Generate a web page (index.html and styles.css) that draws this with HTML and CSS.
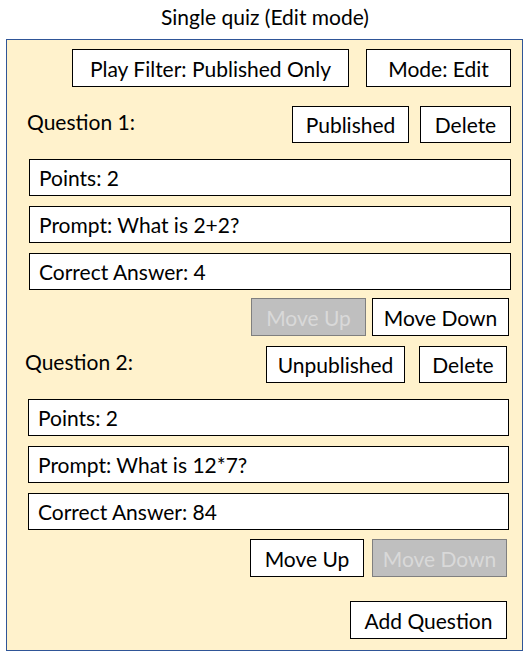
FILE: index.html
```html
<!DOCTYPE html>
<html>
<head>
<meta charset="utf-8">
<link rel="stylesheet" href="styles.css">
</head>
<body>
<h1 class="title">Single quiz (Edit mode)</h1>
<div class="panel">
  <div class="row top-row">
    <button class="btn btn-filter">Play Filter: Published Only</button>
    <button class="btn btn-mode">Mode: Edit</button>
  </div>

  <div class="question q1">
    <div class="q-head">
      <span class="q-label">Question 1:</span>
      <div class="q-actions">
        <button class="btn btn-pub">Published</button>
        <button class="btn btn-del">Delete</button>
      </div>
    </div>
    <div class="fields">
      <div class="field">Points: 2</div>
      <div class="field">Prompt: What is 2+2?</div>
      <div class="field">Correct Answer: 4</div>
    </div>
    <div class="move-row">
      <button class="btn btn-up disabled">Move Up</button>
      <button class="btn btn-down">Move Down</button>
    </div>
  </div>

  <div class="question q2">
    <div class="q-head">
      <span class="q-label">Question 2:</span>
      <div class="q-actions">
        <button class="btn btn-unpub">Unpublished</button>
        <button class="btn btn-del">Delete</button>
      </div>
    </div>
    <div class="fields">
      <div class="field">Points: 2</div>
      <div class="field">Prompt: What is 12*7?</div>
      <div class="field">Correct Answer: 84</div>
    </div>
    <div class="move-row">
      <button class="btn btn-up">Move Up</button>
      <button class="btn btn-down disabled">Move Down</button>
    </div>
  </div>

  <div class="row add-row">
    <button class="btn btn-add">Add Question</button>
  </div>
</div>
</body>
</html>
```

FILE: styles.css
```css
* { box-sizing: border-box; }

html, body {
  margin: 0;
  padding: 0;
  background: #ffffff;
}

body {
  font-family: "Lato", "Open Sans", sans-serif;
  font-size: 21px;
  color: #000;
  width: 530px;
  height: 659px;
}

.title {
  margin: 0;
  height: 39px;
  font-size: 21px;
  font-weight: normal;
  text-align: center;
  line-height: 33px;
}

.panel {
  margin-left: 6px;
  width: 517px;
  height: 612px;
  border: 1px solid #2f5597;
  background: #fff2cc;
  display: flex;
  flex-direction: column;
}

.btn {
  font: inherit;
  color: #000;
  background: #fff;
  border: 1px solid #000;
  height: 38px;
  padding: 0;
  margin: 0;
  display: flex;
  align-items: center;
  justify-content: center;
  line-height: 1;
}

.btn.disabled {
  background: #bfbfbf;
  color: #d9d9d9;
  border-color: #7f7f7f;
}

.row {
  display: flex;
  justify-content: flex-end;
}

.top-row {
  margin-top: 9px;
  padding-right: 11px;
  gap: 17px;
}

.btn-filter { width: 277px; }
.btn-mode { width: 145px; }

.question { display: flex; flex-direction: column; }

.q-head {
  display: flex;
  justify-content: space-between;
  align-items: flex-start;
}

.q-label {
  line-height: 1;
  padding-top: 5px;
}

.q-actions { display: flex; }

.q1 .q-head { margin-top: 19px; padding-left: 20px; padding-right: 11px; }
.q1 .q-actions { gap: 11px; }
.q1 .btn-pub { width: 117px; height: 37px; }
.q1 .btn-del { width: 91px; height: 37px; }

.fields {
  display: flex;
  flex-direction: column;
  gap: 10px;
}

.field {
  background: #fff;
  border: 1px solid #000;
  height: 37px;
  display: flex;
  align-items: center;
  padding-left: 9px;
  line-height: 1;
}

.q1 .fields { margin-top: 16px; margin-left: 22px; margin-right: 11px; }

.move-row {
  display: flex;
  justify-content: flex-end;
  gap: 6px;
}

.q1 .move-row { margin-top: 8px; padding-right: 13px; }
.btn-up { width: 115px; }
.btn-down { width: 137px; }
.q2 .btn-down { width: 135px; }
.q2 .btn-up { width: 114px; }
.q2 .move-row { gap: 8px; margin-top: 9px; padding-right: 15px; }

.q2 .q-head { margin-top: 10px; padding-left: 18px; padding-right: 15px; }
.q2 .q-label { padding-top: 5px; }
.q2 .q-actions { gap: 14px; }
.q2 .btn-unpub { width: 139px; height: 37px; }
.q2 .btn-del { width: 88px; height: 37px; }

.q2 .fields { margin-top: 16px; margin-left: 21px; margin-right: 13px; }

.add-row {
  margin-top: 24px;
  padding-right: 15px;
}

.btn-add { width: 157px; }
```
